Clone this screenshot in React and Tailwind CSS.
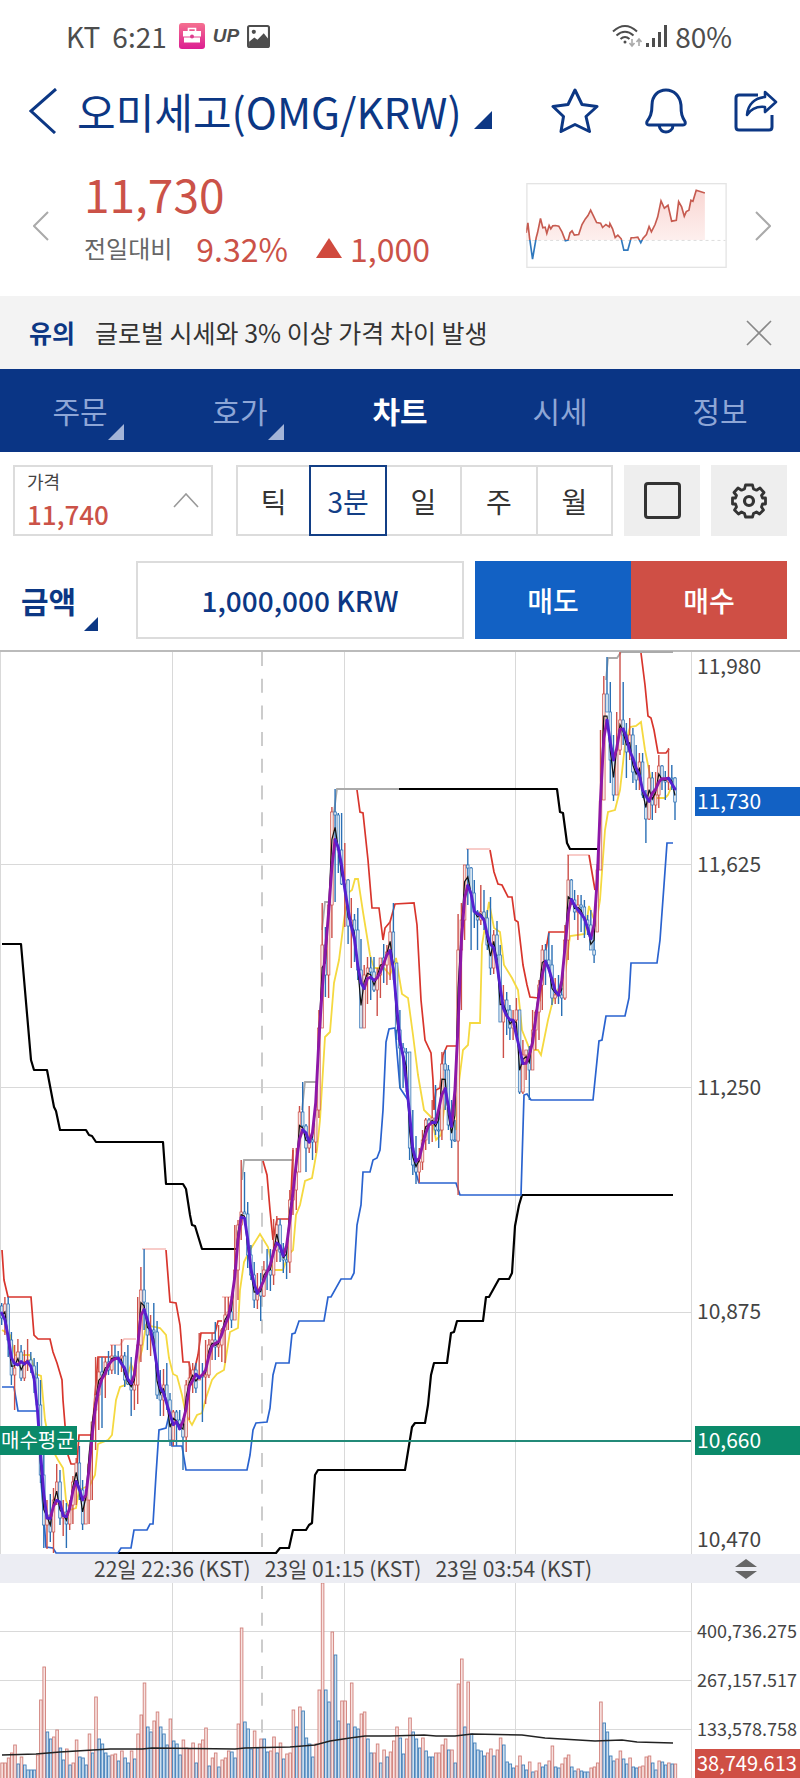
import { useState } from 'react'

const TABS = [
  { label: '주문', more: true },
  { label: '호가', more: true },
  { label: '차트' },
  { label: '시세' },
  { label: '정보' },
]

const PERIODS = ['틱', '3분', '일', '주', '월']

const STEP = 3.237

// [high, low, close] in chart coordinates
const CANDLES = [
  [1303, 1325, 1318], [1297, 1335, 1304], [1297, 1357, 1340], [1332, 1385, 1375], [1345, 1410, 1368], [1339, 1362, 1352],
  [1345, 1381, 1378], [1350, 1381, 1362], [1339, 1371, 1360], [1352, 1373, 1366], [1358, 1393, 1378], [1362, 1408, 1405],
  [1380, 1483, 1475], [1440, 1548, 1525], [1500, 1549, 1515], [1494, 1542, 1532], [1488, 1553, 1500], [1464, 1505, 1482],
  [1470, 1525, 1518], [1500, 1536, 1512], [1503, 1548, 1524], [1500, 1530, 1505], [1476, 1524, 1482], [1458, 1505, 1463],
  [1446, 1500, 1490], [1480, 1530, 1524], [1490, 1524, 1500], [1464, 1524, 1440], [1422, 1500, 1410], [1357, 1450, 1395],
  [1357, 1430, 1372], [1357, 1428, 1375], [1357, 1398, 1362], [1351, 1375, 1370], [1345, 1374, 1356], [1345, 1374, 1357],
  [1351, 1375, 1358], [1339, 1372, 1356], [1352, 1387, 1380], [1345, 1385, 1384], [1357, 1416, 1390], [1370, 1410, 1385],
  [1297, 1404, 1345], [1267, 1362, 1290], [1249, 1330, 1302], [1303, 1350, 1335], [1315, 1356, 1330], [1303, 1345, 1332],
  [1321, 1399, 1395], [1370, 1416, 1400], [1369, 1416, 1385], [1363, 1410, 1400], [1393, 1446, 1440], [1410, 1446, 1412],
  [1410, 1446, 1420], [1410, 1430, 1424], [1418, 1470, 1437], [1380, 1452, 1385], [1363, 1420, 1378], [1363, 1393, 1370],
  [1363, 1393, 1388], [1333, 1380, 1375], [1363, 1422, 1377], [1340, 1404, 1375], [1339, 1378, 1345], [1333, 1360, 1340],
  [1322, 1360, 1347], [1325, 1357, 1345], [1328, 1362, 1330], [1297, 1363, 1315], [1297, 1330, 1312], [1300, 1328, 1320],
  [1225, 1320, 1270], [1220, 1300, 1225], [1160, 1240, 1212], [1172, 1214, 1214], [1202, 1268, 1255], [1245, 1280, 1275],
  [1262, 1308, 1300], [1273, 1309, 1290], [1273, 1321, 1296], [1261, 1297, 1270], [1249, 1290, 1270], [1249, 1291, 1275],
  [1219, 1285, 1250], [1216, 1262, 1225], [1219, 1262, 1252], [1243, 1273, 1260], [1244, 1279, 1262], [1190, 1273, 1200],
  [1148, 1215, 1190], [1148, 1210, 1172], [1106, 1172, 1112], [1082, 1130, 1126], [1124, 1172, 1148], [1106, 1153, 1140],
  [1130, 1160, 1142], [1100, 1153, 1110], [1010, 1118, 1028], [903, 1028, 945], [927, 997, 975], [902, 998, 905],
  [807, 938, 812], [789, 902, 815], [813, 873, 850], [813, 885, 884], [843, 927, 880], [879, 944, 926],
  [898, 968, 920], [914, 962, 930], [908, 980, 970], [939, 1028, 1028], [965, 1028, 975], [957, 1004, 968],
  [957, 1000, 972], [957, 992, 990], [968, 1016, 975], [958, 998, 958], [944, 983, 965], [945, 985, 952],
  [922, 980, 932], [903, 980, 962], [963, 1040, 1030], [1010, 1088, 1048], [1043, 1088, 1052], [1048, 1092, 1052],
  [1052, 1160, 1148], [1110, 1175, 1165], [1136, 1184, 1172], [1148, 1183, 1162], [1130, 1170, 1140], [1118, 1150, 1120],
  [1118, 1144, 1125], [1100, 1142, 1118], [1085, 1135, 1130], [1105, 1148, 1130], [1052, 1140, 1064], [1050, 1110, 1070],
  [1065, 1130, 1125], [1100, 1148, 1140], [1120, 1142, 1141], [914, 1195, 950], [903, 1010, 920], [865, 940, 865],
  [849, 905, 868], [867, 950, 893], [880, 928, 912], [910, 950, 920], [885, 925, 912], [890, 930, 918],
  [910, 950, 945], [897, 975, 968], [930, 974, 935], [921, 960, 955], [945, 1022, 1022], [985, 1058, 1000],
  [992, 1035, 1010], [1005, 1040, 1028], [1010, 1040, 1020], [998, 1032, 1010], [1010, 1094, 1092], [1040, 1094, 1055],
  [1050, 1080, 1050], [1046, 1100, 1070], [1010, 1070, 1030], [1010, 1050, 1012], [980, 1040, 985], [945, 1010, 950],
  [944, 985, 960], [933, 970, 965], [945, 1005, 998], [978, 1004, 995], [975, 1004, 995], [988, 1016, 998],
  [925, 1000, 940], [855, 960, 880], [879, 905, 900], [890, 920, 912], [895, 940, 905], [895, 932, 907],
  [900, 938, 920], [915, 935, 925], [910, 950, 950], [930, 963, 955], [864, 932, 870], [730, 870, 801],
  [676, 800, 694], [657, 712, 712], [682, 783, 760], [735, 801, 795], [712, 795, 750], [652, 755, 720],
  [682, 745, 735], [723, 778, 752], [718, 760, 735], [728, 783, 772], [745, 790, 780], [753, 790, 762],
  [753, 798, 795], [790, 843, 819], [765, 820, 778], [772, 820, 805], [772, 813, 795], [755, 808, 766],
  [765, 790, 780], [771, 800, 782], [748, 790, 778], [765, 790, 778], [777, 820, 802],
]

const VOLUMES = [
  15, 15, 20, 25, 33, -14, 21, -13, -8, -8, -8, 23, 78, 111, -46, -39, 41, 48, -30, -18, 29, -13, 15, 38, -21, -20, -13, 44,
  -25, 81, -39, -34, -25, -22, 23, 24, -17, 27, -20, -15, 27, -19, 44, 63, 95, -51, -46, 57, 66, -51, -44, -33, 59, -37,
  -34, -23, 38, 30, 29, 35, -15, 34, 38, 50, -12, 20, 25, -11, 18, 20, 27, -26, -20, 54, 150, -56, -49, -29, 47, -30, 39,
  -39, -26, 27, 41, -25, 35, -19, 24, 25, 68, -51, 71, -67, -40, -34, -21, 34, 88, 195, -88, -76, 146, -123, -57, 77, 77,
  -54, 95, -51, -49, 64, 66, -39, -25, 25, 34, -15, 28, -21, 26, 37, 51, -40, -24, 39, 60, -46, -39, -30, 40, -27, -21,
  -21, 25, 25, 33, 39, -28, 28, -15, 94, 119, -51, 96, -44, -35, -28, -27, -22, 25, 29, -22, 28, 40, -33, -16, -14, -10,
  12, 22, -13, -8, 16, -6, 7, 15, -11, -13, 17, 32, -11, -10, 14, 20, 23, -11, -7, 9, -7, -6, -6, 10, 11, 15, 76, -55,
  -46, -22, -17, 19, 27, -19, -14, 20, -11, -10, 11, 12, 21, 22, -15, -8, 17, -16, -13, 15, -14, 14,
]

const UPPER_LONG = 'M2 944H21L31 1060L34 1070H47L54 1107L56 1111L60 1130H86L89 1135L92 1136L96 1142H163L166 1184H183L186 1189L190 1215L192 1225L195 1226L202 1249H237 M399 789H557L560 812L563 813L567 843L570 849H598'
const UPPER_GREY = 'M242 1180L244 1160H294 M302 1110L305 1082H317 M322 930L325 902H331 M334 812L337 789H399 M606 680L608 658H617L621 652H673'
const LOWER_LONG = 'M118 1553H276L280 1548H289L293 1530H306L309 1525L312 1523L315 1475L318 1470H405L412 1427L415 1423H425L428 1405L431 1375L434 1363H447L451 1333L454 1332L457 1321H483L486 1297H489L499 1279H509L512 1273L515 1226L519 1205L522 1195H673'
const LOWER_SHORT = 'M2 1387H14L17 1405L18 1411H38L41 1480L46 1547L53 1548L56 1553H118L121 1548H131L134 1530H147L150 1524H153L156 1475L159 1430L166 1428L169 1415L172 1446H182L186 1470H247L250 1455L253 1430L256 1423L267 1422L270 1408L273 1375L276 1363H289L292 1334L295 1333L299 1321H324L328 1297H331L341 1279H351L354 1273L357 1225L361 1205L363 1172H370L373 1160L377 1158L380 1150L383 1110L386 1042L389 1029L395 1028L400 1088L408 1100L415 1170L419 1183H456L460 1195H521L524 1095L527 1094L531 1100H593L599 1041L602 1040L606 1016H625L629 998L631 963H657L660 940L664 885L667 843H673'
const UPPER_SHORT = 'M2 1250L4 1280L8 1297H31L34 1335L38 1339H50L53 1352L57 1363L62 1380L63 1400L65 1425L68 1455L71 1464H77L79 1435H92L95 1395L98 1357H110 M166 1250L170 1302L176 1303L180 1325L183 1362H189L192 1380L198 1355L201 1333H215L218 1321H222 M263 1161L267 1175L270 1210L273 1240L277 1219H290L293 1150 M357 790L360 812L363 813L368 860L372 908H379L383 940L385 928L390 922L395 904L414 903L417 925L421 1000L425 1040L431 1053L433 1080L434 1110L436 1090L440 1088L443 1055L447 1046H457L459 1010L461 950 M490 850L494 872L498 884L502 885L508 897H512L515 920L518 922L523 965L527 985L530 997L538 998L540 1000L545 955L549 932H567 M589 855L595 890 M641 653L645 685L648 716L651 718L654 730L658 753H666L669 749'
const UPPER_PALE = 'M110 1345H120L124 1339H136 M142 1249H166 M222 1297H236 M466 849H490 M567 855H589'
const BASELINE = 'M2 1330L10 1335L15 1355H30L36 1374L41 1376L45 1420L50 1445L58 1460L63 1468L66 1500L70 1510L76 1508L79 1490L90 1485L95 1475L98 1444L108 1440L112 1435L116 1400L120 1387L125 1385L131 1364L135 1375L142 1350L146 1325L160 1328L166 1335L169 1358L173 1374L177 1376L182 1395L186 1415L192 1425L197 1415L202 1413L206 1398L212 1380L217 1374L224 1370L230 1332L238 1328L240 1290L244 1262L250 1250L260 1234L268 1247L273 1270H283L288 1255L293 1250L296 1215L300 1205L305 1181L312 1178L317 1150L320 1120L325 1037L330 1032L334 983L339 960L344 920L348 893L352 890L355 879H358L363 912L370 955L374 968H384L390 975L396 958L402 994L408 998L413 1035L418 1075L424 1110L432 1118L436 1140L441 1135L444 1110L447 1100L452 1120L456 1130L458 1090L463 1050L468 1045L470 1023H480L482 945L489 902L494 928L500 932L504 965L512 978L518 990L522 1030L530 1050H538L541 1055L548 1020L553 1000L565 975L570 936L585 934L589 906L596 925L600 900L605 830L608 812L615 810L620 790L625 745L630 727L636 726L641 722L645 750L650 775L655 798H665L668 795L672 785'
const VOLUME_AVG = 'M2 1755L36 1754L60 1752L93 1750L110 1749L142 1749L152 1748L235 1749L245 1748L290 1747L315 1745L330 1741L350 1738L365 1736L390 1736L424 1735L436 1736L455 1736L472 1734L522 1735L545 1738L595 1741L622 1740L637 1742L673 1743'

const xAt = (i) => 1.7 + i * STEP

const average = CANDLES.map((_, i) => {
  const part = CANDLES.slice(Math.max(0, i - 1), i + 2)
  return part.reduce((sum, c) => sum + c[2] * 2 + c[0] + c[1], 0) / (part.length * 4)
})

const segments = (rising) =>
  average
    .map((y, i) => {
      if (i === 0 || y < average[i - 1] !== rising) return ''
      return `M${xAt(i - 1).toFixed(1)} ${average[i - 1].toFixed(1)}L${xAt(i).toFixed(1)} ${y.toFixed(1)}`
    })
    .join('')

const closeLine = CANDLES.map((c, i) => `${i ? 'L' : 'M'}${xAt(i).toFixed(1)} ${((c[2] + average[i]) / 2).toFixed(1)}`).join('')

function Corner({ className }) {
  return (
    <svg viewBox="0 0 10 10" className={className} fill="currentColor" aria-hidden="true">
      <path d="M10 0V10H0Z" />
    </svg>
  )
}

function Chevron({ className, d, width }) {
  return (
    <svg viewBox="0 0 16 30" className={className} fill="none" stroke="currentColor" strokeWidth={width} aria-hidden="true">
      <path d={d} />
    </svg>
  )
}

function StatusBar() {
  return (
    <div className="flex h-[72px] items-center justify-between pl-[66px] pr-[68px] text-[28px] text-[#4d4d4d]">
      <div className="flex items-center">
        <span>KT</span>
        <span className="ml-3">6:21</span>
        <svg viewBox="0 0 26 26" className="ml-3 size-[26px]" aria-hidden="true">
          <defs>
            <linearGradient id="bag" x2="0" y2="1">
              <stop stopColor="#f5708f" />
              <stop offset="1" stopColor="#dc1d92" />
            </linearGradient>
          </defs>
          <rect width="26" height="26" rx="3" fill="url(#bag)" />
          <path d="M9.500 8V5.500h7V8" fill="none" stroke="#fff" strokeWidth="1.600" />
          <path d="M4 8h18v5.500H4zM5 14.500h16v5H5z" fill="#fff" />
          <circle cx="13" cy="13.500" r="2" fill="#dc3d8f" />
        </svg>
        <span className="ml-2 font-['Liberation_Sans',sans-serif] text-[19px] font-bold italic">UP</span>
        <svg viewBox="0 0 22 22" className="ml-2 size-[23px]" aria-hidden="true">
          <rect x="1" y="1" width="20" height="20" rx="1.500" fill="none" stroke="currentColor" strokeWidth="2" />
          <circle cx="6.500" cy="6.500" r="2" fill="currentColor" />
          <path d="M2 16l5-4 3 2 6-6 5 6v7H2z" fill="currentColor" />
        </svg>
      </div>
      <div className="flex items-center">
        <svg viewBox="0 0 30 24" className="h-6 w-[30px]" fill="none" stroke="currentColor" strokeWidth="2" aria-hidden="true">
          <path d="M1 7.500Q13 -3.500 25 7.500M4.500 11.500Q13 4 21.500 11.500M8.500 15Q13 11 17.500 15" />
          <circle cx="13" cy="18" r="1.500" fill="currentColor" stroke="none" />
          <path d="M20 15v6M17.500 19l2.500 3 2.500-3M27 22v-6M24.500 18l2.500-3 2.500 3" stroke="#aaa" strokeWidth="1.600" />
        </svg>
        <svg viewBox="0 0 21 22" className="ml-1 h-[22px] w-[21px]" fill="currentColor" aria-hidden="true">
          <path d="M0 18h3v4H0zM6 13h3v9H6zM12 7h3v15h-3zM18 0h3v22h-3z" />
        </svg>
        <span className="ml-2">80%</span>
      </div>
    </div>
  )
}

function Header() {
  return (
    <header className="flex h-[78px] items-center pl-[29px] pr-[22px] text-[#0c3784]">
      <button type="button" aria-label="뒤로">
        <svg viewBox="0 0 28 46" className="h-[46px] w-7" fill="none" stroke="currentColor" strokeWidth="3" aria-hidden="true">
          <path d="M27 1L2 23L26 45" />
        </svg>
      </button>
      <button type="button" className="ml-5 flex items-end">
        <h1 className="text-[42px] leading-[60px]">오미세고(OMG/KRW)</h1>
        <Corner className="mb-3 ml-3 size-[18px]" />
      </button>
      <div className="ml-auto flex items-center gap-[46px]">
        <button type="button" aria-label="관심">
          <svg viewBox="0 0 48 46" className="h-[46px] w-12" fill="none" stroke="currentColor" strokeWidth="3" strokeLinejoin="round" aria-hidden="true">
            <path d="M24 2L31 16.500L46 18.500L35 28.500L38.500 43.500L24 36.500L10 43.500L12.500 28.500L2 18.500L17 16.500Z" />
          </svg>
        </button>
        <button type="button" aria-label="알림">
          <svg viewBox="0 0 42 46" className="h-[46px] w-[42px]" fill="none" stroke="currentColor" strokeWidth="3" strokeLinejoin="round" aria-hidden="true">
            <path d="M7 17C7 8 13 2 21 2S35 8 36 17C36 26 37 29 40 33.500Q41 37 38 37H4Q1 37 2 33.500C5 29 7 26 7 17ZM14 37.500C15 42 18 44 21 44S28 42 28 37.500" />
          </svg>
        </button>
        <button type="button" aria-label="공유">
          <svg viewBox="0 0 45 44" className="h-11 w-[45px]" fill="none" stroke="currentColor" strokeWidth="3" strokeLinejoin="round" aria-hidden="true">
            <path d="M25 6H6Q3 6 3 9V38Q3 41 6 41H36Q39 41 39 38V26" />
            <path d="M14 26C15 15 22 9 32 8V3L43 13L32 23V18C24 17 18 20 14 26Z" strokeWidth="2.600" />
          </svg>
        </button>
      </div>
    </header>
  )
}

const SPARK = '0,150 5,120 10,165 19,229 30,165 34,150 43,107 50,135 57,133 62,152 69,128 74,138 80,129 88,128 98,130 108,148 118,174 126,172 132,150 138,144 145,157 158,155 168,125 178,108 186,98 194,82 202,98 212,119 224,121 230,134 240,125 250,132 252,122 260,138 268,164 276,157 286,168 294,202 306,202 316,165 324,165 336,163 345,180 352,166 362,155 370,131 377,147 388,125 396,102 406,54 416,76 427,67 438,115 452,112 459,56 468,72 476,100 482,86 490,82 496,52 502,55 512,22 538,30'

function MiniChart() {
  return (
    <svg viewBox="0 0 604 256" className="h-[85px] w-[201px] shrink-0" fill="none" aria-hidden="true">
      <defs>
        <linearGradient id="spark" x2="0" y2="1">
          <stop stopColor="#f9d6d3" />
          <stop offset="1" stopColor="#fff9f8" />
        </linearGradient>
        <clipPath id="above">
          <rect width="604" height="172" />
        </clipPath>
        <clipPath id="below">
          <rect y="172" width="604" height="84" />
        </clipPath>
      </defs>
      <rect x="2" y="2" width="600" height="252" stroke="#e4e4e4" strokeWidth="4" />
      <polygon points={`0,172 ${SPARK} 538,172`} fill="url(#spark)" clipPath="url(#above)" />
      <path d="M0 173H600" stroke="#ddd" strokeWidth="3" strokeDasharray="9 9" />
      <polyline points={SPARK} stroke="#c65b50" strokeWidth="5" clipPath="url(#above)" />
      <polyline points={SPARK} stroke="#2f78bd" strokeWidth="5" clipPath="url(#below)" />
    </svg>
  )
}

function Summary() {
  return (
    <section className="flex h-[146px] items-start pl-[33px] pr-[29px] text-[#cb5248]">
      <button type="button" aria-label="이전 코인" className="mt-[61px] text-[#aaa]">
        <Chevron className="h-[30px] w-4" d="M15 1L1 15L15 29" width="2" />
      </button>
      <div className="ml-[35px] mt-4">
        <p className="text-[46px] leading-[54px]">11,730</p>
        <div className="flex h-[56px] items-center text-[32px]">
          <span className="text-2xl text-[#666]">전일대비</span>
          <span className="ml-6">9.32%</span>
          <svg viewBox="0 0 26 20" className="ml-7 h-5 w-[26px]" fill="#d04a3e" aria-hidden="true">
            <path d="M13 0L26 20H0Z" />
          </svg>
          <span className="ml-2">1,000</span>
        </div>
      </div>
      <div className="ml-auto mt-[33px]">
        <MiniChart />
      </div>
      <button type="button" aria-label="다음 코인" className="ml-7 mt-[61px] text-[#aaa]">
        <Chevron className="h-[30px] w-4" d="M1 1L15 15L1 29" width="2" />
      </button>
    </section>
  )
}

function Notice() {
  return (
    <div className="flex h-[73px] items-center bg-[#f3f3f3] pl-[29px] pr-7 text-[25px] text-[#333]">
      <strong className="font-bold text-[#0c3784]">유의</strong>
      <p className="ml-5">글로벌 시세와 3% 이상 가격 차이 발생</p>
      <button type="button" aria-label="닫기" className="ml-auto text-[#888]">
        <svg viewBox="0 0 26 26" className="size-[26px]" stroke="currentColor" strokeWidth="1.600" aria-hidden="true">
          <path d="M1 1L25 25M25 1L1 25" />
        </svg>
      </button>
    </div>
  )
}

function Tabs() {
  const [tab, setTab] = useState('차트')

  return (
    <nav className="grid h-[83px] grid-cols-5 bg-[#0a3585]">
      {TABS.map(({ label, more }) => (
        <button
          key={label}
          type="button"
          onClick={() => setTab(label)}
          className={`relative text-[30px] ${tab === label ? 'font-bold text-white' : 'text-[#8ea6d6]'}`}
        >
          {label}
          {more && <Corner className="absolute bottom-3 right-9 size-4 text-[#a3b4d8]" />}
        </button>
      ))}
    </nav>
  )
}

function Toolbar() {
  const [period, setPeriod] = useState('3분')

  return (
    <div className="flex h-[71px] gap-[11px]">
      <button type="button" className="mr-3 flex w-[200px] items-center justify-between border-2 border-[#dcdcdc] px-3 text-left">
        <span className="flex flex-col">
          <span className="text-lg leading-[27px] text-[#444]">가격</span>
          <span className="text-[26px] leading-[38px] font-medium text-[#cb5248]">11,740</span>
        </span>
        <svg viewBox="0 0 26 15" className="h-[15px] w-[26px]" fill="none" stroke="#999" strokeWidth="1.600" aria-hidden="true">
          <path d="M1 14L13 1L25 14" />
        </svg>
      </button>
      <div className="grid flex-1 grid-cols-5">
        {PERIODS.map((p, i) => (
          <button
            key={p}
            type="button"
            onClick={() => setPeriod(p)}
            className={`text-[28px] ${i > 0 ? '-ml-0.5' : ''} border-2 ${
              period === p ? 'z-10 border-[#133f86] text-[#133f86]' : 'border-[#dcdcdc] text-[#333]'
            }`}
          >
            {p}
          </button>
        ))}
      </div>
      <button type="button" aria-label="전체 화면" className="flex w-[76px] items-center justify-center bg-[#eee]">
        <span className="size-[37px] rounded border-3 border-[#333]" />
      </button>
      <button type="button" aria-label="설정" className="flex w-[76px] items-center justify-center bg-[#eee]">
        <svg viewBox="0 0 36 36" className="size-9" fill="none" stroke="#333" strokeWidth="2.800" strokeLinejoin="round" aria-hidden="true">
          <path d="M14.500 2H21.500L22.500 6L25.500 7.200L29 5L33 9.500L30.500 12.500L31.500 15H34.500V21H31.500L30.500 24L32.500 27L28.500 31L25.500 29L22.500 30.500L21.500 34H14.500L13.500 30.500L10.500 29L7.500 31L3.500 27L5.500 24L4.500 21H1.500V15H4.500L5.500 12.500L3 9.500L7 5L10.500 7.200L13.500 6Z" />
          <circle cx="18" cy="18" r="4.500" strokeWidth="3.200" />
        </svg>
      </button>
    </div>
  )
}

function OrderRow() {
  const [amount, setAmount] = useState('1,000,000 KRW')

  return (
    <div className="mt-[25px] flex h-[78px] text-[28px]">
      <button type="button" className="flex w-[123px] items-center pl-2 text-[30px] font-bold text-[#0c3784]">
        금액
        <Corner className="ml-2 mt-12 size-[14px]" />
      </button>
      <input
        type="text"
        aria-label="주문 금액"
        value={amount}
        onChange={(e) => setAmount(e.target.value)}
        className="w-0 flex-1 border-2 border-[#dcdcdc] text-center font-medium text-[#0c3784]"
      />
      <div className="ml-[11px] grid w-[312px] grid-cols-2 font-medium text-white">
        <button type="button" className="bg-[#1261c4]">매도</button>
        <button type="button" className="bg-[#cf4f45]">매수</button>
      </div>
    </div>
  )
}

function PriceChart() {
  return (
    <svg viewBox="0 650 800 904" className="block w-full" fill="none" role="img" aria-label="3분 가격 차트">
      <path d="M0.500 650V1554M172.500 650V1554M344.500 650V1554M515.500 650V1554M691.500 650V1554M0 864.500H691M0 1087.500H691M0 1312.500H691" stroke="#d9d9d9" />
      <path d="M0 651H800" stroke="#bbb" strokeWidth="2" />
      <path d="M262 652V1554" stroke="#ccc" strokeWidth="2" strokeDasharray="14 12.700" />

      <path d={UPPER_PALE} stroke="#f6bcb8" strokeWidth="1.500" />
      <path d={UPPER_GREY} stroke="#aaa" strokeWidth="1.800" />
      <path d={BASELINE} stroke="#f5d940" strokeWidth="1.800" />
      <path d={UPPER_SHORT} stroke="#d8352c" strokeWidth="1.700" />
      <path d={LOWER_LONG} stroke="#000" strokeWidth="2.200" strokeLinejoin="round" />
      <path d={UPPER_LONG} stroke="#000" strokeWidth="2.200" strokeLinejoin="round" />
      <path d={LOWER_SHORT} stroke="#2a63cf" strokeWidth="1.700" />

      {CANDLES.map(([high, low, close], i) => {
        const open = i ? CANDLES[i - 1][2] : close - 12
        const up = close < open
        const x = xAt(i)
        const top = Math.max(high, Math.min(open, close))
        const bottom = Math.min(low, Math.max(open, close))
        const color = up ? '#cc4f48' : '#2a6fb5'
        return (
          <g key={i} stroke={color}>
            <path d={`M${x.toFixed(1)} ${high}V${low}`} strokeWidth="1.400" />
            <rect
              x={(x - 1.3).toFixed(1)}
              y={top}
              width="2.600"
              height={Math.max(1, bottom - top)}
              fill={up ? '#f7e4e2' : '#d7e5f0'}
              strokeWidth="0.700"
            />
          </g>
        )
      })}

      <path d={closeLine} stroke="#111" strokeWidth="1.200" />
      <path d={segments(true)} stroke="#8d17a8" strokeWidth="2.900" strokeLinecap="round" />
      <path d={segments(false)} stroke="#5520d0" strokeWidth="2.900" strokeLinecap="round" />

      <path d="M76 1441H691" stroke="#238a78" strokeWidth="2" />
      <rect y="1426" width="77" height="29" fill="#0b8a6a" />
      <rect x="695" y="1426" width="105" height="29" fill="#0b8a6a" />
      <rect x="695" y="787" width="105" height="29" fill="#1261c4" />

      <g fill="#444" fontSize="21">
        <text x="697" y="674">11,980</text>
        <text x="697" y="872">11,625</text>
        <text x="697" y="1095">11,250</text>
        <text x="697" y="1319">10,875</text>
        <text x="697" y="1547">10,470</text>
      </g>
      <g fill="#fff" fontSize="21">
        <text x="697" y="809">11,730</text>
        <text x="697" y="1448">10,660</text>
        <text x="1" y="1448" fontSize="20">매수평균</text>
      </g>
    </svg>
  )
}

function DateStrip() {
  return (
    <div className="flex h-[29px] items-center bg-[#ecedf3] pl-[94px] pr-[42px] text-[21px] text-[#444]">
      <div className="flex gap-[14px] whitespace-nowrap">
        <span>22일 22:36 (KST)</span>
        <span>23일 01:15 (KST)</span>
        <span>23일 03:54 (KST)</span>
      </div>
      <button type="button" aria-label="차트 높이 조절" className="ml-auto text-[#666]">
        <svg viewBox="0 0 24 22" className="h-[22px] w-6" fill="currentColor" aria-hidden="true">
          <path d="M12 1L23 9H1ZM12 21L23 13H1Z" />
        </svg>
      </button>
    </div>
  )
}

function VolumeChart() {
  return (
    <svg viewBox="0 1583 800 195" className="block w-full" fill="none" role="img" aria-label="거래량">
      <path d="M172.500 1583V1778M344.500 1583V1778M515.500 1583V1778M691.500 1583V1778M0 1631.500H691M0 1680.500H691M0 1729.500H691" stroke="#d9d9d9" />
      <path d="M262 1586V1778" stroke="#ccc" strokeWidth="2" strokeDasharray="13 13.700" />
      {VOLUMES.map((v, i) => (
        <rect
          key={i}
          x={(xAt(i) - 0.9).toFixed(1)}
          y={1778 - Math.abs(v)}
          width="2.600"
          height={Math.abs(v) + 2}
          fill={v > 0 ? '#f8e2e0' : '#cfe0ef'}
          stroke={v > 0 ? '#d07f79' : '#3f7db8'}
          strokeWidth="0.900"
        />
      ))}
      <path d={VOLUME_AVG} stroke="#222" strokeWidth="1.600" />
      <rect x="695" y="1749" width="105" height="29" fill="#cf4f45" />
      <g fill="#444" fontSize="18">
        <text x="697" y="1638">400,736.275</text>
        <text x="697" y="1687">267,157.517</text>
        <text x="697" y="1736">133,578.758</text>
        <text x="697" y="1771" fill="#fff" fontSize="20">38,749.613</text>
      </g>
    </svg>
  )
}

export default function App() {
  return (
    <div className="overflow-hidden bg-white font-['Noto_Sans_CJK_KR',sans-serif]">
      <StatusBar />
      <Header />
      <Summary />
      <Notice />
      <Tabs />
      <main>
        <div className="px-[13px] pt-[13px] pb-[11px]">
          <Toolbar />
          <OrderRow />
        </div>
        <PriceChart />
        <DateStrip />
        <VolumeChart />
      </main>
    </div>
  )
}
